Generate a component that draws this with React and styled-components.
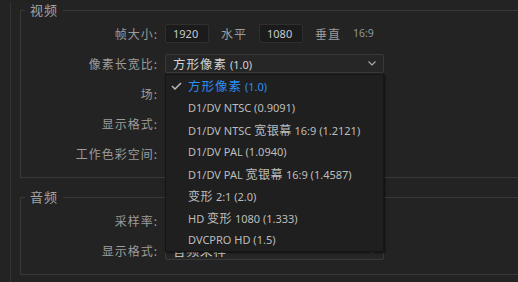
import React from 'react'
import styled, { createGlobalStyle } from 'styled-components'

const GlobalStyle = createGlobalStyle`
  html, body {
    margin: 0;
    padding: 0;
    background: #232323;
    overflow: hidden;
  }
  body {
    font-family: "Noto Sans", "Noto Sans CJK SC", sans-serif;
    font-size: 11px;
    color: #a0a0a0;
  }
`

const Page = styled.div`
  width: 518px;
  height: 282px;
  overflow: hidden;
  position: relative;
`

const Panel = styled.div`
  margin-left: 10px;
  border-left: 1px solid #333333;
  padding-left: 9px;
  height: 282px;
  box-sizing: border-box;
`

const Group = styled.fieldset`
  margin: ${p => p.$top}px 0 0 0;
  width: 560px;
  box-sizing: border-box;
  border: 1px solid #383838;
  padding: 0 0 9px 0;
  min-width: 0;
`

const Legend = styled.legend`
  margin-left: 4px;
  padding: 0 5px;
  font-family: "Noto Sans CJK SC", sans-serif;
  font-size: 13px;
  line-height: 16px;
  letter-spacing: 1px;
  color: #a4a4a4;
`

const Row = styled.div`
  display: grid;
  grid-template-columns: 137px auto;
  column-gap: 7px;
  align-items: center;
  height: 30px;
`

const Label = styled.span`
  text-align: right;
  font-family: "Noto Sans CJK SC", sans-serif;
  font-size: 12px;
  letter-spacing: 1px;
  color: #9c9c9c;
  white-space: nowrap;
`

const Controls = styled.div`
  display: flex;
  align-items: center;
  gap: 12px;
`

const NumberBox = styled.div`
  width: 44px;
  height: 19px;
  box-sizing: border-box;
  background: #1b1b1b;
  border: 1px solid #2f2f2f;
  border-radius: 2px;
  padding-left: 7px;
  display: flex;
  align-items: center;
  font-size: 11px;
  color: #c6c9cc;
`

const Word = styled.span`
  font-family: "Noto Sans CJK SC", sans-serif;
  font-size: 12px;
  letter-spacing: 1px;
  color: #9c9c9c;
`

const Ratio = styled.span`
  font-size: 10.5px;
  color: #959595;
`

const SelectWrap = styled.div`
  position: relative;
  width: 219px;
`

const Select = styled.div`
  height: 19px;
  box-sizing: border-box;
  background: #262626;
  border: 1px solid #393939;
  border-radius: 2px;
  padding: 0 7px;
  display: flex;
  align-items: center;
  justify-content: space-between;
  color: #d2d2d2;
  font-size: 11px;
  white-space: nowrap;
`

const Cjk = styled.span`
  font-family: "Noto Sans CJK SC", sans-serif;
  font-size: ${p => (p.$small ? 12 : 12.5)}px;
  letter-spacing: ${p => (p.$small ? 0.5 : 1)}px;
`

const Menu = styled.ul`
  position: absolute;
  top: 20px;
  left: 0;
  width: 219px;
  margin: 0;
  padding: 0;
  list-style: none;
  box-sizing: border-box;
  background: #1f1f1f;
  border: 1px solid #151515;
  box-shadow: 1px 1px 2px rgba(0, 0, 0, 0.6);
  z-index: 10;
`

const Item = styled.li`
  height: 22px;
  display: flex;
  align-items: center;
  padding-left: 22px;
  position: relative;
  font-size: 11px;
  white-space: nowrap;
  color: ${p => (p.$active ? '#2d8df0' : '#bdbdbd')};
`

const Check = styled.svg`
  position: absolute;
  left: 5px;
  top: 7px;
`

const Chevron = () => (
  <svg width="8" height="5" viewBox="0 0 8 5">
    <path d="M0.5 0.5 L4 4 L7.5 0.5" fill="none" stroke="#a8a8a8" strokeWidth="1.2" />
  </svg>
)

const options = [
  ['方形像素', ' (1.0)'],
  ['D1/DV NTSC (0.9091)'],
  ['D1/DV NTSC ', '宽银幕', ' 16:9 (1.2121)'],
  ['D1/DV PAL (1.0940)'],
  ['D1/DV PAL ', '宽银幕', ' 16:9 (1.4587)'],
  ['变形', ' 2:1 (2.0)'],
  ['HD ', '变形', ' 1080 (1.333)'],
  ['DVCPRO HD (1.5)'],
]

const isCjk = s => /[\u4e00-\u9fff]/.test(s)

const Mixed = ({ parts, small }) =>
  parts.map((s, i) =>
    isCjk(s) ? (
      <Cjk key={i} $small={small}>
        {s}
      </Cjk>
    ) : (
      <span key={i}>{s}</span>
    )
  )

const App = () => (
  <Page>
    <GlobalStyle />
    <Panel>
      <Group $top={2}>
        <Legend>视频</Legend>
        <Row>
          <Label>帧大小:</Label>
          <Controls>
            <NumberBox>1920</NumberBox>
            <Word>水平</Word>
            <NumberBox>1080</NumberBox>
            <Word>垂直</Word>
            <Ratio>16:9</Ratio>
          </Controls>
        </Row>
        <Row>
          <Label>像素长宽比:</Label>
          <SelectWrap>
            <Select>
              <span>
                <Mixed parts={['方形像素', ' (1.0)']} />
              </span>
              <Chevron />
            </Select>
            <Menu>
              {options.map((parts, i) => (
                <Item key={i} $active={i === 0}>
                  {i === 0 && (
                    <Check width="11" height="8" viewBox="0 0 11 8">
                      <path d="M1 4 L4 7 L10 1" fill="none" stroke="#b8b8b8" strokeWidth="1.5" />
                    </Check>
                  )}
                  <span>
                    <Mixed parts={parts} small={i > 0} />
                  </span>
                </Item>
              ))}
            </Menu>
          </SelectWrap>
        </Row>
        <Row>
          <Label>场:</Label>
          <SelectWrap>
            <Select>
              <span />
              <Chevron />
            </Select>
          </SelectWrap>
        </Row>
        <Row>
          <Label>显示格式:</Label>
          <SelectWrap>
            <Select>
              <span />
              <Chevron />
            </Select>
          </SelectWrap>
        </Row>
        <Row>
          <Label>工作色彩空间:</Label>
          <SelectWrap>
            <Select>
              <span />
              <Chevron />
            </Select>
          </SelectWrap>
        </Row>
      </Group>
      <Group $top={11}>
        <Legend>音频</Legend>
        <Row>
          <Label>采样率:</Label>
          <SelectWrap>
            <Select>
              <span />
              <Chevron />
            </Select>
          </SelectWrap>
        </Row>
        <Row>
          <Label>显示格式:</Label>
          <SelectWrap>
            <Select>
              <Cjk>音频采样</Cjk>
              <Chevron />
            </Select>
          </SelectWrap>
        </Row>
      </Group>
    </Panel>
  </Page>
)

export default App
